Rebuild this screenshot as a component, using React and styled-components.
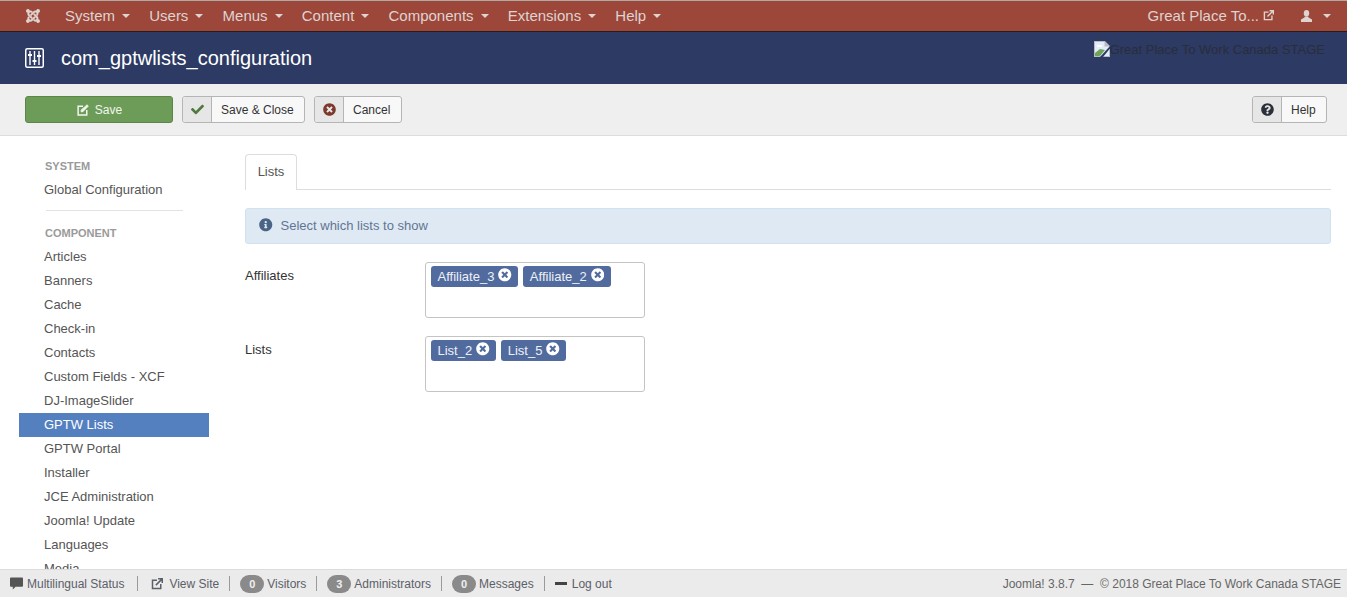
import React from "react";
import styled, { createGlobalStyle } from "styled-components";
import {
  FaCheck,
  FaInfoCircle,
  FaJoomla,
  FaQuestionCircle,
  FaTimesCircle,
} from "react-icons/fa";

const GlobalStyle = createGlobalStyle`
  html, body {
    margin: 0;
    height: 100%;
    overflow: hidden;
    background: #fff;
    font-family: "Liberation Sans", Arial, sans-serif;
    font-size: 13px;
    color: #515151;
  }
`;

const Page = styled.div`
  height: 597px;
  display: flex;
  flex-direction: column;
`;

const Navbar = styled.nav`
  height: 32px;
  flex: none;
  box-sizing: border-box;
  display: flex;
  align-items: center;
  padding: 0 16px 1px 25px;
  background: #9c473a;
  border-top: 1px solid #b0aaa6;
  border-bottom: 1px solid #2a1a18;
  color: #dfd3d0;
  font-size: 15px;
`;

const NavMenu = styled.div`
  display: flex;
  align-items: center;
  gap: 19.2px;
  margin-left: 24px;
`;

const NavItem = styled.span`
  display: inline-flex;
  align-items: center;
  white-space: nowrap;
`;

const Caret = styled.span`
  display: inline-block;
  margin-left: ${(p) => p.$gap || 7}px;
  margin-top: 1px;
  border-left: 4px solid transparent;
  border-right: 4px solid transparent;
  border-top: 4px solid currentColor;
`;

const NavRight = styled.div`
  margin-left: auto;
  display: flex;
  align-items: center;
`;

const SiteLink = styled.span`
  display: inline-flex;
  align-items: center;
  gap: 4px;
  margin-right: 27px;
`;

const Header = styled.header`
  height: 52px;
  flex: none;
  display: flex;
  align-items: center;
  background: #2d3a63;
  padding: 0 22px 0 25px;
`;

const Title = styled.h1`
  margin: 0 0 0 17px;
  font-size: 20px;
  font-weight: 400;
  color: #fff;
  line-height: 52px;
`;

const BrokenLogo = styled.span`
  margin-left: auto;
  align-self: flex-start;
  margin-top: 9px;
  display: inline-flex;
  align-items: flex-start;
  color: #2a2d3c;
  font-size: 13px;
  line-height: 18px;
`;

const Toolbar = styled.div`
  height: 52px;
  flex: none;
  box-sizing: border-box;
  display: flex;
  align-items: center;
  gap: 9px;
  padding: 0 20px 0 25px;
  background: #efefef;
  border-bottom: 1px solid #dcdcdc;
`;

const SaveButton = styled.button`
  width: 148px;
  height: 27px;
  padding: 0 0 0 1px;
  display: flex;
  align-items: center;
  justify-content: center;
  gap: 6px;
  background: #6d9c59;
  border: 1px solid #5b8647;
  border-radius: 3px;
  color: #f1f6ee;
  font: 12px "Liberation Sans", Arial, sans-serif;
`;

const Button = styled.button`
  height: 27px;
  width: ${(p) => p.$width}px;
  padding: 0;
  display: flex;
  align-items: stretch;
  background: #f8f8f8;
  border: 1px solid #b5b5b5;
  border-radius: 3px;
  color: #333;
  font: 12px "Liberation Sans", Arial, sans-serif;
  margin-left: ${(p) => (p.$right ? "auto" : "0")};
`;

const ButtonIcon = styled.span`
  width: 28px;
  flex: none;
  display: flex;
  align-items: center;
  justify-content: center;
  background: #e6e6e6;
  border-right: 1px solid #b5b5b5;
  border-radius: 3px 0 0 3px;
  color: ${(p) => p.$color};
  font-size: 13px;
  padding-bottom: 1px;
`;

const ButtonLabel = styled.span`
  padding: 0 0 0 9px;
  line-height: 26px;
  white-space: nowrap;
`;

const Main = styled.main`
  flex: 1;
  min-height: 0;
  overflow: hidden;
  display: flex;
`;

const Sidebar = styled.aside`
  width: 190px;
  flex: none;
  margin-left: 19px;
  padding-top: 22px;
`;

const SideHeading = styled.div`
  padding-left: 26px;
  font-size: 11px;
  line-height: 16px;
  font-weight: 700;
  color: #9a9a9a;
  margin-bottom: 4px;
`;

const SideLink = styled.div`
  height: 24px;
  line-height: 24px;
  padding-left: 25px;
  color: ${(p) => (p.$active ? "#fff" : "#555")};
  background: ${(p) => (p.$active ? "#5580c0" : "transparent")};
`;

const SideDivider = styled.div`
  height: 1px;
  background: #e2e2e2;
  margin: 8px 26px 14px 27px;
`;

const Content = styled.section`
  flex: 1;
  min-width: 0;
  margin: 18px 16px 0 36px;
`;

const Tabs = styled.div`
  height: 36px;
  box-sizing: border-box;
  border-bottom: 1px solid #ddd;
`;

const Tab = styled.div`
  width: 52px;
  height: 36px;
  box-sizing: border-box;
  background: #fff;
  border: 1px solid #ddd;
  border-bottom: none;
  border-radius: 4px 4px 0 0;
  text-align: center;
  line-height: 34px;
  color: #555;
`;

const Alert = styled.div`
  height: 36px;
  box-sizing: border-box;
  margin-top: 18px;
  display: flex;
  align-items: center;
  gap: 8px;
  padding: 0 0 2px 13px;
  background: #dfe9f3;
  border: 1px solid #d0e2ef;
  border-radius: 3px;
  color: #5f7595;
`;

const AlertIcon = styled(FaInfoCircle)`
  color: #4a6485;
  font-size: 13.5px;
`;

const FieldRow = styled.div`
  display: flex;
  margin-top: 18px;
`;

const FieldLabel = styled.label`
  width: 180px;
  flex: none;
  padding-top: 6px;
  line-height: 16px;
  color: #333;
`;

const ChosenBox = styled.div`
  width: 220px;
  height: 56px;
  box-sizing: border-box;
  padding: 3px 5px;
  display: flex;
  align-items: flex-start;
  gap: 5px;
  background: #fff;
  border: 1px solid #c4c4c4;
  border-radius: 3px;
`;

const Tag = styled.span`
  height: 21px;
  display: inline-flex;
  align-items: center;
  gap: 4px;
  padding: 0 6.5px;
  background: #516b9e;
  border-radius: 3px;
  color: #eef1f6;
  line-height: 21px;
`;

const TagClose = styled(FaTimesCircle)`
  color: #fff;
  font-size: 13.5px;
  margin-top: -3px;
`;

const StatusBar = styled.footer`
  height: 28px;
  flex: none;
  box-sizing: border-box;
  display: flex;
  align-items: center;
  padding: 0 6px 0 10px;
  background: #ebebeb;
  border-top: 1px solid #dcdcdc;
  font-size: 12px;
  color: #5c6068;
`;

const StatusItem = styled.span`
  display: inline-flex;
  align-items: center;
  gap: ${(p) => p.$gap}px;
  white-space: nowrap;
`;

const StatusDivider = styled.span`
  width: 1px;
  height: 15px;
  flex: none;
  background: #9a9a9a;
  margin: 0 ${(p) => p.$space || 10}px;
`;

const Badge = styled.span`
  width: 24px;
  height: 18px;
  border-radius: 9px;
  background: #8a8a8a;
  color: #f0f0f0;
  font-size: 11px;
  font-weight: 700;
  line-height: 18px;
  text-align: center;
`;

const LogoutBar = styled.span`
  width: 12px;
  height: 3px;
  background: #444;
`;

const Copyright = styled.span`
  margin-left: auto;
  white-space: nowrap;
  color: #666;
`;

const ExternalLinkIcon = ({ size = 11 }) => (
  <svg width={size} height={size} viewBox="0 0 16 16" fill="none" stroke="currentColor" strokeWidth="2">
    <path d="M8 3H2v11h11V8" />
    <path d="M6.5 9.5 14.5 1.5M9.5 1h5.5v5.5" />
  </svg>
);

const EditIcon = () => (
  <svg width="12" height="12" viewBox="0 0 16 16" fill="none" stroke="currentColor" strokeWidth="2">
    <path d="M8 3H1.5v11.5H13V8" />
    <path d="M5.5 10.5V8l8-7 1.5 2-7.5 7.5z" fill="currentColor" strokeWidth="1" />
  </svg>
);

const SlidersIcon = () => (
  <svg width="19" height="20" viewBox="0 0 19 20" fill="none" stroke="#fff">
    <rect x="0.75" y="0.75" width="17.5" height="18.5" rx="1.5" strokeWidth="1.5" />
    <path d="M5 3v14M9.5 3v14M14 3v14" strokeWidth="1.4" />
    <path d="M3 7h4M7.5 13h4M12 8h4" strokeWidth="2" />
  </svg>
);

const BrokenImageIcon = () => (
  <svg width="16" height="16" viewBox="0 0 16 16">
    <path d="M0 0h11l5 5v11H0z" fill="#b8bcc2" />
    <path d="M1 1h9.5v4.5H15V15H1z" fill="#e4ecfa" />
    <path d="M3 4h5v2H3z" fill="#fff" />
    <path d="M1 12l5-4 5 1-5 6H1z" fill="#6fa35a" />
    <path d="M6 16l10-11v2.5L9 16z" fill="#2d3a63" />
  </svg>
);

const UserIcon = () => (
  <svg width="11" height="12" viewBox="0 0 11 12" fill="currentColor">
    <ellipse cx="5.5" cy="3.2" rx="2.7" ry="3.2" />
    <path d="M3.8 6.5h3.4l.3 1L11 9.5V12H0V9.5l3.5-2z" />
  </svg>
);

const BubbleIcon = () => (
  <svg width="13" height="13" viewBox="0 0 14 13" fill="#555">
    <path d="M1 0h12a1 1 0 0 1 1 1v8a1 1 0 0 1-1 1H6l-3 3v-3H1a1 1 0 0 1-1-1V1a1 1 0 0 1 1-1z" />
  </svg>
);

const menus = ["System", "Users", "Menus", "Content", "Components", "Extensions", "Help"];

const sideLinks = [
  "Articles",
  "Banners",
  "Cache",
  "Check-in",
  "Contacts",
  "Custom Fields - XCF",
  "DJ-ImageSlider",
  "GPTW Lists",
  "GPTW Portal",
  "Installer",
  "JCE Administration",
  "Joomla! Update",
  "Languages",
  "Media",
];

export default function App() {
  return (
    <Page>
      <GlobalStyle />
      <Navbar>
        <FaJoomla size={16} />
        <NavMenu>
          {menus.map((m) => (
            <NavItem key={m}>
              {m}
              <Caret />
            </NavItem>
          ))}
        </NavMenu>
        <NavRight>
          <SiteLink>
            Great Place To...
            <ExternalLinkIcon />
          </SiteLink>
          <UserIcon />
          <Caret $gap={11} />
        </NavRight>
      </Navbar>
      <Header>
        <SlidersIcon />
        <Title>com_gptwlists_configuration</Title>
        <BrokenLogo>
          <BrokenImageIcon />
          Great Place To Work Canada STAGE
        </BrokenLogo>
      </Header>
      <Toolbar>
        <SaveButton>
          <EditIcon />
          Save
        </SaveButton>
        <Button $width={123}>
          <ButtonIcon $color="#4f7a3e">
            <FaCheck />
          </ButtonIcon>
          <ButtonLabel>Save &amp; Close</ButtonLabel>
        </Button>
        <Button $width={88}>
          <ButtonIcon $color="#7d3a2c">
            <FaTimesCircle />
          </ButtonIcon>
          <ButtonLabel>Cancel</ButtonLabel>
        </Button>
        <Button $right $width={75}>
          <ButtonIcon $color="#2a2f3a">
            <FaQuestionCircle />
          </ButtonIcon>
          <ButtonLabel>Help</ButtonLabel>
        </Button>
      </Toolbar>
      <Main>
        <Sidebar>
          <SideHeading>SYSTEM</SideHeading>
          <SideLink>Global Configuration</SideLink>
          <SideDivider />
          <SideHeading>COMPONENT</SideHeading>
          {sideLinks.map((l) => (
            <SideLink key={l} $active={l === "GPTW Lists"}>
              {l}
            </SideLink>
          ))}
        </Sidebar>
        <Content>
          <Tabs>
            <Tab>Lists</Tab>
          </Tabs>
          <Alert>
            <AlertIcon />
            Select which lists to show
          </Alert>
          <FieldRow>
            <FieldLabel>Affiliates</FieldLabel>
            <ChosenBox>
              <Tag>
                Affiliate_3
                <TagClose />
              </Tag>
              <Tag>
                Affiliate_2
                <TagClose />
              </Tag>
            </ChosenBox>
          </FieldRow>
          <FieldRow>
            <FieldLabel>Lists</FieldLabel>
            <ChosenBox>
              <Tag>
                List_2
                <TagClose />
              </Tag>
              <Tag>
                List_5
                <TagClose />
              </Tag>
            </ChosenBox>
          </FieldRow>
        </Content>
      </Main>
      <StatusBar>
        <StatusItem $gap={4}>
          <BubbleIcon />
          Multilingual Status
        </StatusItem>
        <StatusDivider $space={13} />
        <StatusItem $gap={6}>
          <ExternalLinkIcon size={12} />
          View Site
        </StatusItem>
        <StatusDivider />
        <StatusItem $gap={3}>
          <Badge>0</Badge>
          Visitors
        </StatusItem>
        <StatusDivider />
        <StatusItem $gap={3}>
          <Badge>3</Badge>
          Administrators
        </StatusItem>
        <StatusDivider />
        <StatusItem $gap={3}>
          <Badge>0</Badge>
          Messages
        </StatusItem>
        <StatusDivider />
        <StatusItem $gap={5}>
          <LogoutBar />
          Log out
        </StatusItem>
        <Copyright>Joomla! 3.8.7 &nbsp;—&nbsp; © 2018 Great Place To Work Canada STAGE</Copyright>
      </StatusBar>
    </Page>
  );
}
